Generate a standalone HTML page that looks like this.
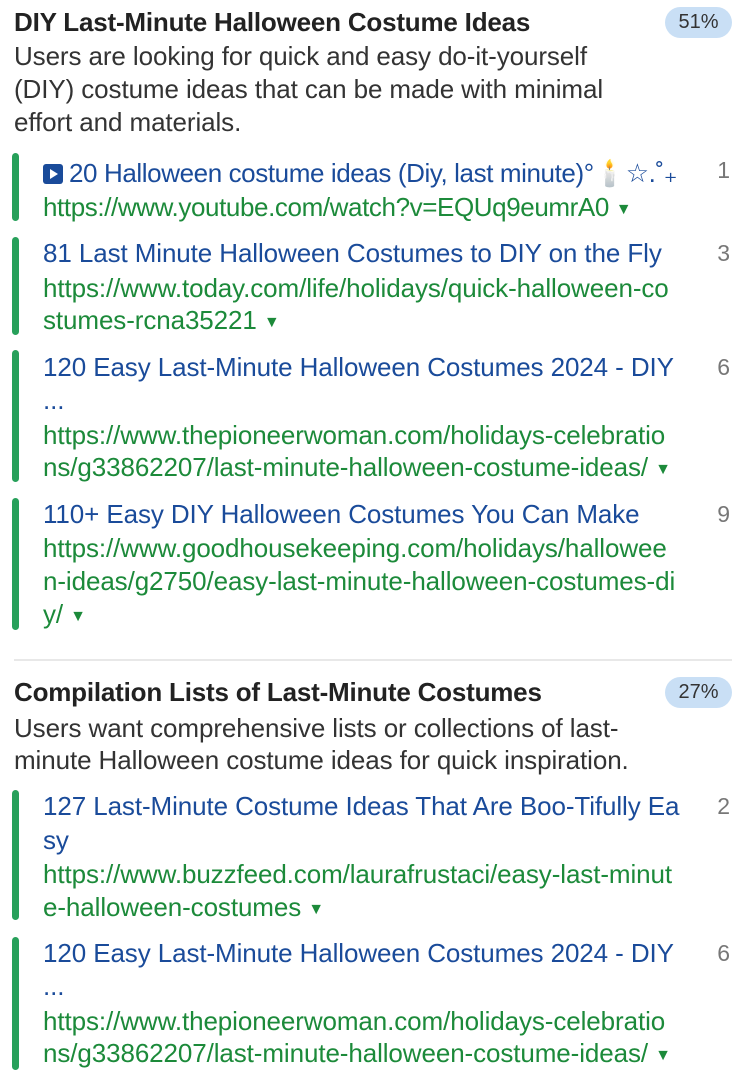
<!DOCTYPE html>
<html><head><meta charset="utf-8"><style>
body{margin:0;width:752px;height:1087px;background:#fff;position:relative;overflow:hidden;font-family:"Liberation Sans",Arial,sans-serif;}
.l{position:absolute;height:34px;line-height:34px;font-size:26px;white-space:nowrap;letter-spacing:-0.1px;}
.t{left:14px;color:#222;font-weight:bold;letter-spacing:-0.2px;}
.d{left:14px;color:#333;}
.a{left:43px;color:#1a4b9a;}
.u{left:43px;color:#1c8a3a;}
.n{right:22px;color:#777;font-size:23px;}
.bar{position:absolute;left:12px;width:7px;background:#27a05a;border-radius:4px;}
.badge{position:absolute;left:665px;width:67px;height:31px;border-radius:16px;background:#c9dff5;color:#333;font-size:20px;line-height:31px;text-align:center;}
.tri{font-size:16px;vertical-align:2px;}
.hr{position:absolute;left:14px;width:718px;top:659px;height:2px;background:#e8e8e8;}
.yt{display:inline-block;width:20px;height:20px;background:#1a4b9a;border-radius:3px;vertical-align:-2px;position:relative;margin-right:6px;}
.yt:after{content:"";position:absolute;left:7px;top:5px;border-left:8px solid #fff;border-top:5px solid transparent;border-bottom:5px solid transparent;}
</style></head><body>
<div class="l t" style="top:5px">DIY Last-Minute Halloween Costume Ideas</div>
<div class="badge" style="top:7px">51%</div>
<div class="l d" style="top:39px">Users are looking for quick and easy do-it-yourself</div>
<div class="l d" style="top:72px">(DIY) costume ideas that can be made with minimal</div>
<div class="l d" style="top:105px">effort and materials.</div>

<div class="bar" style="top:153px;height:68px"></div>
<div class="l a" style="top:156px;letter-spacing:-0.4px"><span class="yt"></span>20 Halloween costume ideas (Diy, last minute)°🕯️☆.˚₊</div>
<div class="l n" style="top:153px">1</div>
<div class="l u" style="top:190px;letter-spacing:-0.4px">https://www.youtube.com/watch?v=EQUq9eumrA0 <span class="tri">▼</span></div>

<div class="bar" style="top:237px;height:98px"></div>
<div class="l a" style="top:236px">81 Last Minute Halloween Costumes to DIY on the Fly</div>
<div class="l n" style="top:236px">3</div>
<div class="l u" style="top:271px">https://www.today.com/life/holidays/quick-halloween-co</div>
<div class="l u" style="top:303px">stumes-rcna35221 <span class="tri">▼</span></div>

<div class="bar" style="top:350px;height:132px"></div>
<div class="l a" style="top:350px">120 Easy Last-Minute Halloween Costumes 2024 - DIY</div>
<div class="l n" style="top:350px">6</div>
<div class="l a" style="top:383px">...</div>
<div class="l u" style="top:418px">https://www.thepioneerwoman.com/holidays-celebratio</div>
<div class="l u" style="top:450px">ns/g33862207/last-minute-halloween-costume-ideas/ <span class="tri">▼</span></div>

<div class="bar" style="top:498px;height:132px"></div>
<div class="l a" style="top:497px">110+ Easy DIY Halloween Costumes You Can Make</div>
<div class="l n" style="top:497px">9</div>
<div class="l u" style="top:531px">https://www.goodhousekeeping.com/holidays/hallowee</div>
<div class="l u" style="top:564px">n-ideas/g2750/easy-last-minute-halloween-costumes-di</div>
<div class="l u" style="top:597px">y/ <span class="tri">▼</span></div>

<div class="hr"></div>

<div class="l t" style="top:675px">Compilation Lists of Last-Minute Costumes</div>
<div class="badge" style="top:677px">27%</div>
<div class="l d" style="top:711px">Users want comprehensive lists or collections of last-</div>
<div class="l d" style="top:743px">minute Halloween costume ideas for quick inspiration.</div>

<div class="bar" style="top:790px;height:130px"></div>
<div class="l a" style="top:789px">127 Last-Minute Costume Ideas That Are Boo-Tifully Ea</div>
<div class="l n" style="top:789px">2</div>
<div class="l a" style="top:823px">sy</div>
<div class="l u" style="top:857px">https://www.buzzfeed.com/laurafrustaci/easy-last-minut</div>
<div class="l u" style="top:890px">e-halloween-costumes <span class="tri">▼</span></div>

<div class="bar" style="top:937px;height:133px"></div>
<div class="l a" style="top:936px">120 Easy Last-Minute Halloween Costumes 2024 - DIY</div>
<div class="l n" style="top:936px">6</div>
<div class="l a" style="top:969px">...</div>
<div class="l u" style="top:1004px">https://www.thepioneerwoman.com/holidays-celebratio</div>
<div class="l u" style="top:1036px">ns/g33862207/last-minute-halloween-costume-ideas/ <span class="tri">▼</span></div>
</body></html>
